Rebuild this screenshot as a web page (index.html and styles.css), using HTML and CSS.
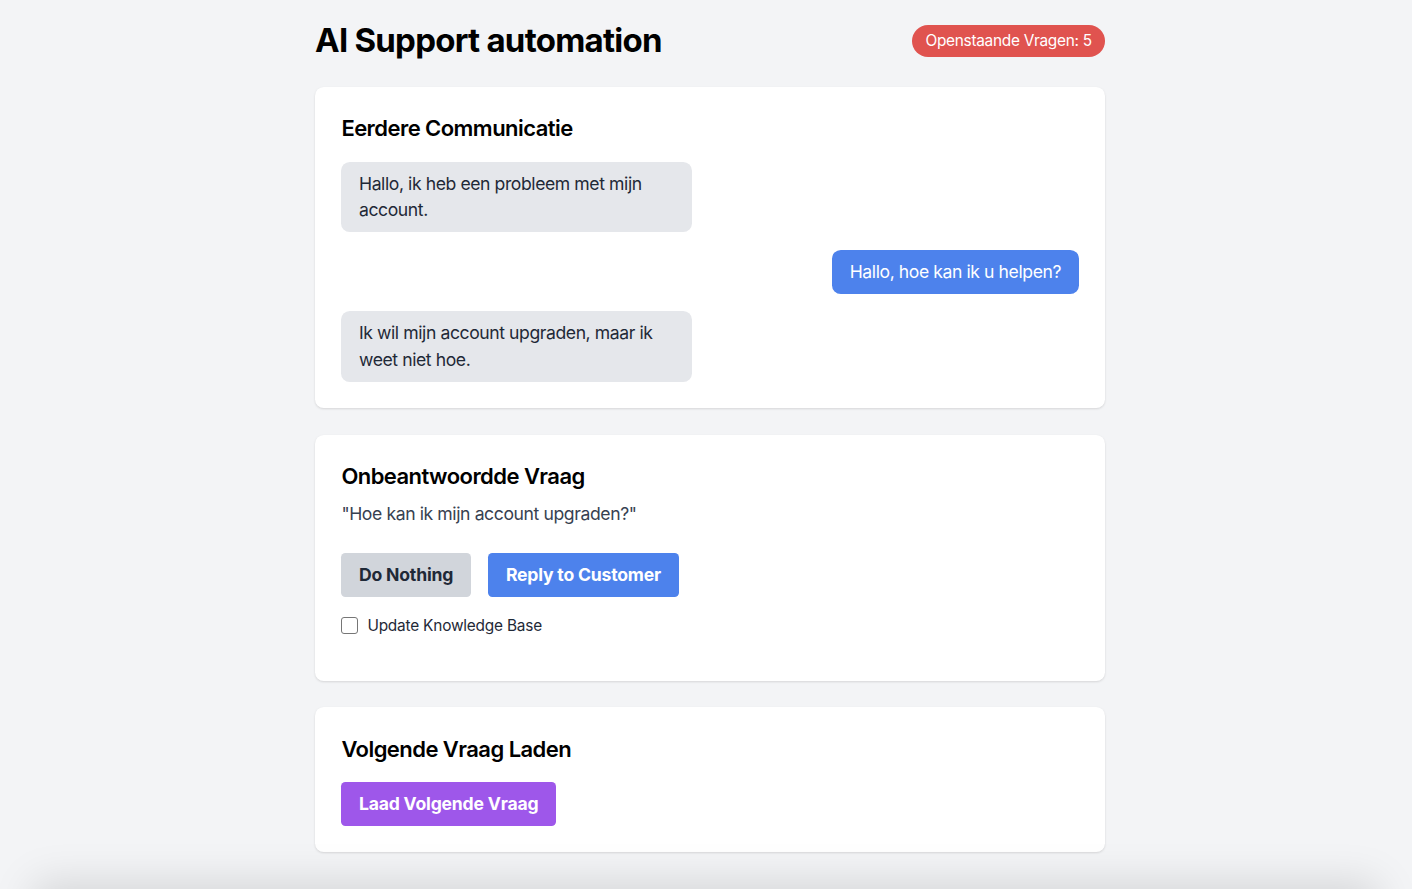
FILE: index.html
```html
<!DOCTYPE html>
<html lang="nl">
<head>
<meta charset="utf-8">
<title>AI Support automation</title>
<link rel="stylesheet" href="styles.css">
</head>
<body>
<main class="container">
  <header class="header">
    <h1 class="title">AI Support automation</h1>
    <span class="badge">Openstaande Vragen: 5</span>
  </header>

  <section class="card">
    <h2 class="card-title">Eerdere Communicatie</h2>
    <div class="chat">
      <div class="bubble bubble-in">Hallo, ik heb een probleem met mijn account.</div>
      <div class="bubble bubble-out">Hallo, hoe kan ik u helpen?</div>
      <div class="bubble bubble-in">Ik wil mijn account upgraden, maar ik weet niet hoe.</div>
    </div>
  </section>

  <section class="card">
    <h2 class="card-title card-title-tight">Onbeantwoordde Vraag</h2>
    <p class="question">"Hoe kan ik mijn account upgraden?"</p>
    <div class="actions">
      <button class="btn btn-gray">Do Nothing</button>
      <button class="btn btn-blue">Reply to Customer</button>
    </div>
    <label class="check">
      <input type="checkbox" class="check-box">
      <span>Update Knowledge Base</span>
    </label>
  </section>

  <section class="card">
    <h2 class="card-title">Volgende Vraag Laden</h2>
    <button class="btn btn-purple">Laad Volgende Vraag</button>
  </section>
</main>
<div class="bottom-shadow"></div>
</body>
</html>
```

FILE: styles.css
```css
* { box-sizing: border-box; }

html, body {
  margin: 0;
  padding: 0;
  background: #f3f4f6;
  font-family: Inter, "Noto Sans", "Liberation Sans", sans-serif;
  color: #111;
  overflow: hidden;
}

.container {
  width: 790px;
  margin-left: calc(50% - 391px);
  padding-top: 21px;
}

.header {
  display: flex;
  justify-content: space-between;
  align-items: center;
  margin-bottom: 26.4px;
}

.title {
  margin: 0;
  font-size: 33px;
  line-height: 39.6px;
  font-weight: 700;
  color: #000;
  letter-spacing: -0.75px;
}

.badge {
  background: #e0534f;
  color: #fff;
  font-size: 15.4px;
  line-height: 22px;
  letter-spacing: -0.28px;
  padding: 5px 13.2px;
  border-radius: 999px;
}

.card {
  background: #fff;
  border-radius: 8.8px;
  padding: 26.4px;
  margin-bottom: 26.4px;
  box-shadow: 0 1px 3px rgba(0,0,0,0.08), 0 1px 2px rgba(0,0,0,0.05);
}

.card-title {
  margin: 0 0 17.6px;
  font-size: 22px;
  line-height: 30.8px;
  font-weight: 600;
  color: #000;
  letter-spacing: -0.55px;
}

.card-title-tight { margin-bottom: 8.8px; }

.chat {
  display: flex;
  flex-direction: column;
  gap: 17.6px;
}

.bubble {
  max-width: 352px;
  padding: 8.8px 17.6px;
  border-radius: 8.8px;
  font-size: 17.6px;
  line-height: 26.4px;
  letter-spacing: -0.42px;
}

.bubble-in {
  align-self: flex-start;
  width: 351px;
  background: #e5e7eb;
  color: #1f2937;
}

.bubble-out {
  align-self: flex-end;
  background: #4d82ec;
  color: #fff;
}

.question {
  margin: 0 0 26.4px;
  font-size: 17.6px;
  line-height: 26.4px;
  letter-spacing: -0.4px;
  color: #374151;
}

.actions {
  display: flex;
  gap: 17.6px;
  margin-bottom: 17.6px;
}

.btn {
  font-family: inherit;
  font-size: 17.6px;
  line-height: 26.4px;
  font-weight: 700;
  letter-spacing: -0.2px;
  padding: 8.8px 17.6px;
  border: none;
  border-radius: 4.4px;
  cursor: pointer;
}

.btn-gray { background: #d1d5db; color: #1f2937; }
.btn-blue { background: #4d82ec; color: #fff; }
.btn-purple { background: #9e57ea; color: #fff; }

.check {
  display: flex;
  align-items: center;
  font-size: 15.4px;
  line-height: 22px;
  letter-spacing: -0.2px;
  color: #1f2937;
  margin-bottom: 17.6px;
}

.check-box {
  appearance: none;
  -webkit-appearance: none;
  width: 17px;
  height: 17px;
  margin: 0 9px 0 0;
  border: 1.3px solid #767676;
  border-radius: 3px;
  background: #fff;
}

.bottom-shadow {
  position: fixed;
  left: 40px;
  right: 40px;
  top: 100%;
  height: 200px;
  box-shadow: 0 0 40px 6px rgba(0,0,0,0.13);
  background: #f3f4f6;
}
```
